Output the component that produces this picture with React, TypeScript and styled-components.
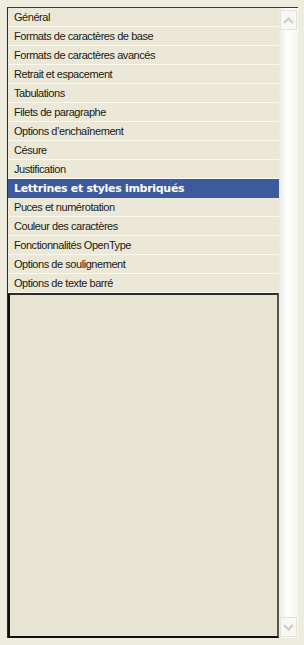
import styled, { createGlobalStyle } from "styled-components";

const GlobalStyle = createGlobalStyle`
  html, body {
    margin: 0;
    padding: 0;
    background: #eeebdf;
  }
`;

const items = [
  "Général",
  "Formats de caractères de base",
  "Formats de caractères avancés",
  "Retrait et espacement",
  "Tabulations",
  "Filets de paragraphe",
  "Options d’enchaînement",
  "Césure",
  "Justification",
  "Lettrines et styles imbriqués",
  "Puces et numérotation",
  "Couleur des caractères",
  "Fonctionnalités OpenType",
  "Options de soulignement",
  "Options de texte barré",
];

const SELECTED = 9;

export default function App() {
  return (
    <>
      <GlobalStyle />
      <Page>
        <Frame>
          <List>
            {items.map((label, i) => (
              <Row key={label} selected={i === SELECTED}>
                {label}
              </Row>
            ))}
            <Empty />
          </List>
          <ScrollBar>
            <ScrollButton>
              <svg width="11" height="7" viewBox="0 0 11 7">
                <path d="M1 6 L5.5 1.5 L10 6" fill="none" stroke="#c9cdc4" strokeWidth="2" />
              </svg>
            </ScrollButton>
            <ScrollButton>
              <svg width="11" height="7" viewBox="0 0 11 7">
                <path d="M1 1 L5.5 5.5 L10 1" fill="none" stroke="#c9cdc4" strokeWidth="2" />
              </svg>
            </ScrollButton>
          </ScrollBar>
        </Frame>
      </Page>
    </>
  );
}

const Page = styled.div`
  width: 304px;
  height: 645px;
  padding: 7px 0 0 7px;
  box-sizing: border-box;
`;

const Frame = styled.div`
  display: flex;
  width: 291px;
  height: 631px;
  border-top: 1px solid #3a3a36;
  border-left: 1px solid #2a2a28;
  box-sizing: border-box;
`;

const List = styled.div`
  flex: 1;
  display: flex;
  flex-direction: column;
  background: #ebe8d7;
`;

const Row = styled.div<{ selected?: boolean }>`
  height: 19px;
  box-sizing: border-box;
  padding: 0 0 0 6px;
  display: flex;
  align-items: center;
  border-bottom: 1px solid ${(p) => (p.selected ? "#3c5a9c" : "#faf8ee")};
  background: ${(p) => (p.selected ? "#3c5a9c" : "#ebe8d7")};
  color: ${(p) => (p.selected ? "#ffffff" : "#1a1a18")};
  font-family: ${(p) => (p.selected ? '"DejaVu Sans", sans-serif' : '"Liberation Sans", sans-serif')};
  font-size: 11px;
  font-weight: ${(p) => (p.selected ? 700 : 400)};
  letter-spacing: ${(p) => (p.selected ? "-0.3px" : "-0.45px")};
  white-space: nowrap;
`;

const Empty = styled.div`
  flex: 1;
  background: #e8e4d2;
  border-top: 2px solid #2e2d2a;
  border-left: 2px solid #111;
  border-bottom: 2px solid #111;
  border-right: 2px solid #55544f;
`;

const ScrollBar = styled.div`
  width: 19px;
  display: flex;
  flex-direction: column;
  justify-content: space-between;
  padding: 2px 0 1px;
  background: linear-gradient(to right, #ecebe6, #ffffff 45%, #f6f6f2);
`;

const ScrollButton = styled.div`
  height: 18px;
  margin: 0 1px;
  display: flex;
  align-items: center;
  justify-content: center;
  border: 1px solid #e3e3dc;
  background: #f7f7f4;
`;
